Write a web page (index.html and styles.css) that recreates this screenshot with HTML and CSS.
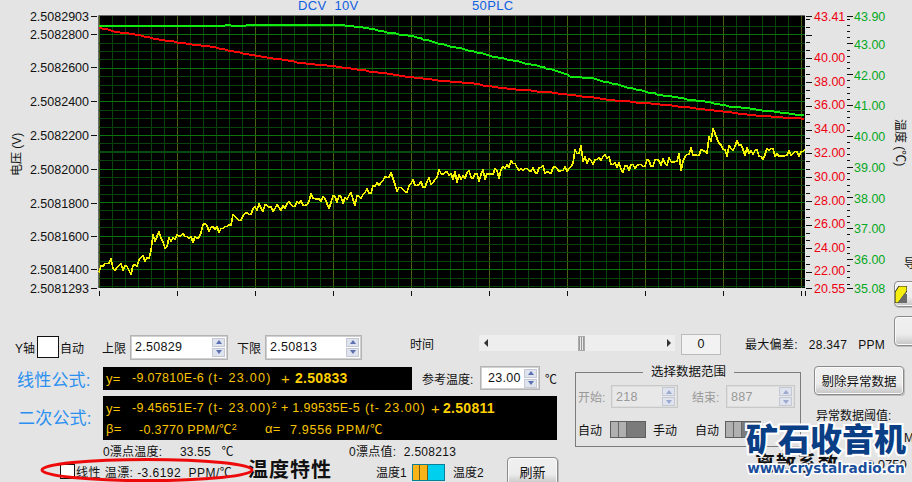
FILE: index.html
```html
<!DOCTYPE html>
<html lang="zh">
<head>
<meta charset="utf-8">
<title>温度特性</title>
<link rel="stylesheet" href="styles.css">
</head>
<body>
<main class="page">
  <section class="chart-row">
    <svg class="chart" width="894" height="330" viewBox="0 0 894 330">
      <rect class="plot-bg" x="99" y="16" width="706" height="272"/>
      <g id="grid"></g>
      <path class="plot-edge" d="M98.5 288V15.5H805"/>
      <g id="ticks"></g>
      <polyline id="green" class="trace trace-green"/>
      <polyline id="red" class="trace trace-red"/>
      <polyline id="yellow" class="trace trace-yellow"/>
      <text class="title" x="298" y="9.5">DCV  10V</text>
      <text class="title" x="472" y="9.5">50PLC</text>
      <g class="axis-left">
        <text x="89" y="21">2.5082903</text>
        <text x="89" y="39">2.5082800</text>
        <text x="89" y="72">2.5082600</text>
        <text x="89" y="106">2.5082400</text>
        <text x="89" y="140">2.5082200</text>
        <text x="89" y="174">2.5082000</text>
        <text x="89" y="208">2.5081800</text>
        <text x="89" y="241">2.5081600</text>
        <text x="89" y="274">2.5081400</text>
        <text x="89" y="293">2.5081293</text>
      </g>
      <g class="axis-red">
        <text x="814" y="21">43.41</text>
        <text x="814" y="62">40.00</text>
        <text x="814" y="86">38.00</text>
        <text x="814" y="109">36.00</text>
        <text x="814" y="133">34.00</text>
        <text x="814" y="157">32.00</text>
        <text x="814" y="181">30.00</text>
        <text x="814" y="205">28.00</text>
        <text x="814" y="228">26.00</text>
        <text x="814" y="252">24.00</text>
        <text x="814" y="275">22.00</text>
        <text x="814" y="293">20.55</text>
      </g>
      <g class="axis-green">
        <text x="854" y="21">43.90</text>
        <text x="854" y="49">43.00</text>
        <text x="854" y="80">42.00</text>
        <text x="854" y="110">41.00</text>
        <text x="854" y="141">40.00</text>
        <text x="854" y="172">39.00</text>
        <text x="854" y="203">38.00</text>
        <text x="854" y="233">37.00</text>
        <text x="854" y="264">36.00</text>
        <text x="854" y="293">35.08</text>
      </g>
      <text class="axis-title" transform="translate(21 176) rotate(-90)">电压 (V)</text>
      <text class="axis-title" transform="translate(896 119) rotate(90)">温度 (℃)</text>
    </svg>
    <div class="rail">
      <span class="rail-label">导</span>
      <button class="btn rail-btn">
        <svg class="rail-icon" width="12" height="17" viewBox="0 0 12 17"><path class="icon-yellow" d="M0 17V6L4 0H12V5L3 17Z"/><path class="icon-grey" d="M3 17L9 8H12V17Z"/></svg>
      </button>
      <button class="btn rail-btn rail-btn-plain"></button>
    </div>
  </section>

  <section class="top-row">
    <span class="lbl y-label">Y轴</span>
    <span class="check check-large"></span>
    <span class="lbl auto-label">自动</span>
    <span class="lbl upper-label">上限</span>
    <div class="num num-wide"><span class="num-val">2.50829</span><span class="spin"><i class="up"></i><i class="down"></i></span></div>
    <span class="lbl lower-label">下限</span>
    <div class="num num-wide2"><span class="num-val">2.50813</span><span class="spin"><i class="up"></i><i class="down"></i></span></div>
    <span class="lbl time-label">时间</span>
    <div class="slider"><i class="arrow-left"></i><i class="thumb"></i><i class="arrow-right"></i></div>
    <div class="zero">0</div>
    <span class="lbl maxdev">最大偏差:&nbsp; &nbsp;28.347&nbsp; &nbsp;PPM</span>
  </section>

  <section class="lower">
    <div class="formulas">
      <div class="row-b">
        <span class="formula-name name-linear">线性公式:</span>
        <div class="readout readout-linear">
          <span class="rd y">y=</span><span class="rd c1">-9.07810E-6</span><span class="rd t1">(t- 23.00)</span><span class="rd plus1">+</span><b class="rd strong1">2.50833</b>
        </div>
        <span class="lbl ref-label">参考温度:</span>
        <div class="num num-ref"><span class="num-val">23.00</span><span class="spin"><i class="up"></i><i class="down"></i></span></div>
        <span class="lbl deg">℃</span>
      </div>
      <div class="row-c">
        <span class="formula-name name-quad">二次公式:</span>
        <div class="readout readout-quad">
          <div class="rd-line">
            <span class="rd y">y=</span><span class="rd c1">-9.45651E-7</span><span class="rd t1">(t- 23.00)<sup>2</sup></span><span class="rd c2">+ 1.99535E-5</span><span class="rd t2">(t- 23.00)</span><span class="rd plus2">+</span><b class="rd strong2">2.50811</b>
          </div>
          <div class="rd-line">
            <span class="rd y">β=</span><span class="rd beta">-0.3770 PPM/℃<sup>2</sup></span><span class="rd alpha">α=</span><span class="rd alpha-val">7.9556 PPM/℃</span>
          </div>
        </div>
      </div>
      <div class="row-d">
        <span class="lbl drift-temp">0漂点温度:&nbsp; &nbsp; &nbsp;33.55&nbsp; &nbsp;℃</span>
        <span class="lbl drift-val">0漂点值:&nbsp; 2.508213</span>
      </div>
      <div class="row-e">
        <span class="check check-small"></span>
        <span class="lbl linear-drift">线性 温漂: -3.6192&nbsp; PPM/℃</span>
        <strong class="big-title temp-title">温度特性</strong>
        <span class="lbl t1-label">温度1</span>
        <span class="bi-switch"><i class="bi-on"></i></span>
        <span class="lbl t2-label">温度2</span>
        <button class="btn refresh">刷新</button>
      </div>
    </div>

    <fieldset class="range">
      <legend>选择数据范围</legend>
      <div class="range-row">
        <span class="lbl muted start-label">开始:</span>
        <div class="num num-off num-start"><span class="num-val">218</span><span class="spin"><i class="up"></i><i class="down"></i></span></div>
        <span class="lbl muted end-label">结束:</span>
        <div class="num num-off num-end"><span class="num-val">887</span><span class="spin"><i class="up"></i><i class="down"></i></span></div>
      </div>
      <div class="range-row range-row2">
        <span class="lbl auto1">自动</span>
        <span class="toggle"><i></i><i></i></span>
        <span class="lbl manual1">手动</span>
        <span class="lbl auto2">自动</span>
        <span class="toggle"><i></i><i></i></span>
      </div>
    </fieldset>

    <div class="side">
      <button class="btn purge">剔除异常数据</button>
      <span class="lbl threshold">异常数据阈值:</span>
      <span class="lbl unit-cut">M</span>
      <div class="side-bottom">
        <strong class="big-title disc-title">离散系数</strong>
        <span class="lbl disc-val">0.0750</span>
      </div>
    </div>
  </section>

  <svg class="ellipse" width="216" height="30" viewBox="0 0 216 30"><ellipse cx="108" cy="15" rx="105" ry="10.5"/></svg>
  <div class="watermark"><span class="wm-cn">矿石收音机</span><span class="wm-en">www.crystalradio.cn</span></div>
</main>
<script src="script.js"></script>
</body>
</html>
```

FILE: styles.css
```css
* { box-sizing: border-box; }
html, body { margin: 0; padding: 0; }
body { background: #e4e4e4; overflow: hidden; }
.page {
  position: relative;
  width: 912px;
  height: 482px;
  overflow: hidden;
  background: #e4e4e4;
  color: #111;
  font-family: "Liberation Sans", "Noto Sans CJK SC", sans-serif;
  font-size: 12px;
}

/* chart */
.chart-row { display: flex; height: 330px; }
.chart { display: block; flex: none; overflow: visible; }
.plot-bg { fill: #000; }
.plot-edge { fill: none; stroke: #6a6a6a; stroke-width: 1; }
.grid-minor { stroke: #0a440a; stroke-width: 1; shape-rendering: crispEdges; }
.grid-h { stroke: #0a720a; stroke-width: 1; shape-rendering: crispEdges; }
.grid-v { stroke: #476410; stroke-width: 1; shape-rendering: crispEdges; }
.grid-thick { stroke: #0a4c0e; stroke-width: 2; shape-rendering: crispEdges; }
.tick { stroke: #111; stroke-width: 1; shape-rendering: crispEdges; }
.trace { fill: none; stroke-width: 2; stroke-linejoin: bevel; shape-rendering: crispEdges; }
.trace-green { stroke: #0fe90f; }
.trace-red { stroke: #f40808; }
.trace-yellow { stroke: #f4f400; stroke-width: 1.7; }
.title {
  fill: #1060e0;
  font-size: 13px;
  letter-spacing: 0.35px;
  white-space: pre;
}
.axis-left text { fill: #111; font-size: 12.5px; text-anchor: end; }
.axis-red text { fill: #ee0010; font-size: 12.5px; }
.axis-green text { fill: #04a81e; font-size: 12.5px; }
.axis-title { fill: #111; font-size: 12px; }

/* right rail */
.rail { width: 18px; flex: none; display: flex; flex-direction: column; }
.rail-label { flex: none; margin: 256px 0 0 10px; height: 17px; line-height: 17px; white-space: nowrap; }
.rail-btn { flex: none; width: 26px; height: 26px; margin-top: 8px; padding: 3px 0 0 9px; display: block; }
.rail-btn-plain { height: 30px; margin-top: 9px; }
.rail-icon { display: block; }
.icon-yellow { fill: #f6ee10; stroke: #222; stroke-width: 1; }
.icon-grey { fill: #6a6a6a; }

/* shared controls */
.lbl { white-space: nowrap; flex: none; }
.muted { color: #999; }
.check { display: block; flex: none; background: #fff; border: 1px solid #111; }
.check-large { width: 22px; height: 22px; margin-left: 4px; }
.check-small { width: 15px; height: 15px; margin-left: 60px; margin-top: 7px; }
.num {
  display: flex;
  align-items: center;
  flex: none;
  background: #fff;
  border: 1px solid #b4b4b4;
  outline: 1px solid #d0d0d0;
  outline-offset: -2px;
  font-size: 12.5px;
}
.num-val { flex: 1; padding-left: 4px; letter-spacing: 0.3px; }
.spin { display: flex; flex-direction: column; gap: 1px; width: 13px; margin-right: 2px; }
.spin i {
  display: flex;
  align-items: center;
  justify-content: center;
  height: 9px;
  background: #dfe3ee;
  border: 1px solid #c4c8d2;
}
.spin i::before { content: ""; border-left: 3px solid transparent; border-right: 3px solid transparent; }
.spin .up::before { border-bottom: 4px solid #5b70b0; }
.spin .down::before { border-top: 4px solid #5b70b0; }
.num-off { background: #e8e8e8; color: #999; border-color: #c8c8c8; outline-color: #dedede; }
.num-off .spin i::before { opacity: 0.5; }
.btn {
  border: 1px solid #8a8a8a;
  border-radius: 4px;
  background: linear-gradient(#f0f0f0 0, #ececec 62%, #c4c4c4 100%);
  box-shadow: 1px 1px 0 #bdbdbd, inset 0 0 0 1px #fafafa;
  font: inherit;
  color: #111;
  padding: 0;
}

/* top row */
.top-row { display: flex; align-items: center; height: 26px; margin-top: 4px; }
.y-label { margin-left: 15px; width: 18px; }
.auto-label { margin-left: 1px; width: 24px; }
.upper-label { margin-left: 18px; width: 25px; }
.num-wide { margin-left: 3px; width: 98px; height: 25px; }
.lower-label { margin-left: 9px; width: 25px; }
.num-wide2 { margin-left: 3px; width: 97px; height: 25px; }
.time-label { margin: 0 0 8px 48px; width: 24px; }
.slider {
  display: flex;
  align-items: center;
  flex: none;
  width: 196px;
  height: 16px;
  margin: 0 0 8px 45px;
  padding: 0 4px 0 5px;
  background: #eeeeee;
}
.arrow-left { border: 4px solid transparent; border-left: 0; border-right: 4px solid #333; }
.thumb {
  width: 7px;
  height: 15px;
  margin: 0 auto 0 90px;
  background: repeating-linear-gradient(90deg, #999 0 1px, #e8e8e8 1px 2px);
  border: 1px solid #aaa;
}
.arrow-right { border: 4px solid transparent; border-right: 0; border-left: 4px solid #333; }
.zero {
  flex: none;
  width: 40px;
  height: 21px;
  margin: 0 0 5px 6px;
  border: 1px solid #bbb;
  background: #f2f2f2;
  text-align: center;
  line-height: 19px;
  font-size: 12.5px;
}
.maxdev { margin: 0 0 8px 24px; letter-spacing: 0.3px; }

/* lower */
.lower { display: flex; height: 122px; align-items: flex-start; }
.formulas { width: 565px; flex: none; }
.row-b, .row-c { display: flex; align-items: center; margin-top: 6px; }
.row-b { height: 24px; }
.row-c { height: 44px; }
.formula-name { color: #2a8ff0; font-size: 17px; letter-spacing: 0.2px; white-space: nowrap; flex: none; }
.name-linear { margin-left: 17px; width: 86px; }
.name-quad { margin-left: 18px; width: 85px; margin-bottom: 4px; }
.readout {
  background: #000;
  color: #f8c400;
  flex: none;
  font-size: 12.5px;
  letter-spacing: 0.3px;
  padding-left: 3px;
}
.readout-linear { display: flex; align-items: center; width: 309px; height: 23px; }
.readout-quad { width: 454px; height: 44px; padding-top: 2px; }
.rd-line { display: flex; align-items: center; height: 20px; }
.rd { flex: none; white-space: nowrap; }
.rd sup { font-size: 9px; line-height: 0; vertical-align: 4px; }
.rd.y { width: 26px; font-size: 13px; }
.c1 { width: 76px; }
.t1 { width: 73px; letter-spacing: 1.3px; }
.plus1 { width: 14px; font-size: 15px; }
.strong1, .strong2 { font-size: 14px; color: #ffd000; }
.c2 { width: 84px; }
.t2 { width: 66px; letter-spacing: 1px; }
.plus2 { width: 11px; font-size: 15px; }
.strong2 { margin-left: 1px; }
.beta { margin-left: 7px; width: 126px; }
.alpha { width: 25px; font-size: 13px; }
.alpha-val { display: block; letter-spacing: 0.7px; }
.ref-label { margin-left: 10px; width: 58px; }
.num-ref { width: 60px; height: 24px; }
.num-ref .num-val { padding-left: 7px; }
.deg { margin-left: 5px; }
.row-d { display: flex; height: 13px; margin-top: 4px; align-items: center; }
.drift-temp { margin-left: 103px; width: 246px; letter-spacing: 0.2px; }
.drift-val { letter-spacing: 0.3px; }
.row-e { display: flex; align-items: flex-start; height: 25px; }
.row-e .lbl { margin-top: 6px; }
.row-e .linear-drift { margin-left: 1px; width: 172px; letter-spacing: 0.45px; }
.big-title { font-size: 20px; font-weight: 700; white-space: nowrap; line-height: 26px; flex: none; }
.temp-title { width: 128px; letter-spacing: 1px; }
.t1-label { width: 36px; }
.bi-switch {
  display: block;
  flex: none;
  width: 33px;
  height: 17px;
  margin-top: 7px;
  background: #00cfee;
  border: 1px solid #0a7f96;
}
.bi-on {
  display: block;
  width: 15px;
  height: 15px;
  background: linear-gradient(90deg, #f9b418 0 6px, #7a5a10 6px 7px, #f9b418 7px 14px, #7a5a10 14px);
}
.t2-label { margin-left: 8px; width: 54px; }
.refresh { width: 51px; height: 28px; margin-top: 0; font-size: 13px; flex: none; }

/* range group */
.range {
  flex: none;
  width: 226px;
  height: 82px;
  margin: 5px 0 0 10px;
  padding: 0 0 0 2px;
  border: 1px solid #7c7c7c;
  min-width: 0;
}
.range legend { padding: 0 8px; margin-left: 65px; font-size: 12.5px; line-height: 14px; }
.range-row { display: flex; align-items: center; height: 23px; margin-top: 6px; }
.range-row2 { height: 17px; margin-top: 13px; }
.start-label { width: 33px; }
.num-start { width: 67px; height: 23px; }
.end-label { margin-left: 14px; width: 34px; }
.num-end { width: 69px; height: 23px; }
.auto1 { width: 32px; }
.toggle {
  display: flex;
  flex: none;
  width: 36px;
  height: 17px;
  background: #7b7b7b;
  border: 1px solid #5e5e5e;
}
.toggle i { display: block; width: 8px; background: #b0b0b0; border-right: 1px solid #666; }
.manual1 { margin-left: 7px; width: 42px; }
.auto2 { width: 30px; }

/* side */
.side { flex: none; width: 98px; margin-left: 13px; display: flex; flex-direction: column; }
.purge { width: 90px; height: 29px; margin-top: 6px; font-size: 12.5px; }
.threshold { margin: 11px 0 0 2px; }
.unit-cut { margin: 8px 0 0 90px; height: 14px; line-height: 14px; }
.side-bottom { display: flex; margin: 6px 0 0 -59px; align-items: center; height: 26px; }
.disc-title { width: 112px; letter-spacing: 1px; }
.disc-val { font-size: 13px; }

/* overlays */
.ellipse { position: absolute; left: 39px; top: 455px; }
.ellipse ellipse { fill: none; stroke: #ee0a0a; stroke-width: 3; }
.watermark {
  position: absolute;
  left: 745px;
  top: 421px;
  width: 162px;
  display: flex;
  flex-direction: column;
  align-items: center;
  color: #0a3f86;
}
.wm-cn {
  font-size: 32px;
  line-height: 38px;
  font-weight: 900;
  white-space: nowrap;
  -webkit-text-stroke: 4px #fff;
  paint-order: stroke fill;
}
.wm-en {
  font-family: "DejaVu Sans", sans-serif;
  font-size: 13.7px;
  line-height: 19px;
  font-weight: 700;
  color: #1a4f9c;
  white-space: nowrap;
  -webkit-text-stroke: 3px #fff;
  paint-order: stroke fill;
}
```

FILE: script.js
```js
(function () {
  var NS = 'http://www.w3.org/2000/svg';
  function line(parent, cls, x1, y1, x2, y2) {
    var l = document.createElementNS(NS, 'line');
    l.setAttribute('class', cls);
    l.setAttribute('x1', x1); l.setAttribute('y1', y1);
    l.setAttribute('x2', x2); l.setAttribute('y2', y2);
    parent.appendChild(l);
  }
  var grid = document.getElementById('grid');
  var ticks = document.getElementById('ticks');
  var L = 99, R = 805, T = 16, B = 288, i, x, y;

  // vertical grid: minor every 13px, major every 78px
  for (i = 0; ; i++) {
    x = 99.5 + i * 13;
    if (x > R) break;
    line(grid, i % 6 === 0 ? 'grid-v' : 'grid-minor', x, T, x, B);
  }
  // horizontal grid: major every 33.6px, minor at 1/4
  for (i = -1; i < 32; i++) {
    y = Math.round(34.3 + i * 8.39) + 0.5;
    if (y < T || y > B) continue;
    line(grid, (i % 4 === 0 && i >= 0) ? 'grid-h' : 'grid-minor', L, y, R, y);
  }
  line(grid, 'grid-thick', L, 152, R, 152);

  // x ticks
  for (i = 0; i < 10; i++) {
    x = 99.5 + i * 78;
    if (x < R) line(ticks, 'tick', x, 291, x, 296);
  }
  line(ticks, 'tick', 805.5, 291, 805.5, 296);

  // left axis ticks
  [16, 34, 67, 101, 135, 169, 203, 236, 269, 288].forEach(function (v) {
    line(ticks, 'tick', 91, v + 0.5, 97, v + 0.5);
  });
  // red axis ticks
  for (i = 0; i < 36; i++) {
    y = 288 - i * 7.92;
    if (y < 15) break;
    line(ticks, 'tick', 806, Math.round(y) + 0.5, (i % 3 === 2 ? 812 : 810), Math.round(y) + 0.5);
  }
  line(ticks, 'tick', 806, 16.5, 812, 16.5);
  line(ticks, 'tick', 806, 288.5, 812, 288.5);
  // green axis ticks
  for (i = 0; i < 50; i++) {
    y = 289.8 - i * 6.16;
    if (y < 15) break;
    if (y > 288) continue;
    line(ticks, 'tick', 847, Math.round(y) + 0.5, (i % 5 === 0 ? 853 : 850), Math.round(y) + 0.5);
  }
  line(ticks, 'tick', 847, 16.5, 853, 16.5);
  line(ticks, 'tick', 847, 288.5, 853, 288.5);

  // seeded random
  var seed = 20240611;
  function rnd() {
    seed |= 0; seed = seed + 0x6D2B79F5 | 0;
    var t = Math.imul(seed ^ seed >>> 15, 1 | seed);
    t = t + Math.imul(t ^ t >>> 7, 61 | t) ^ t;
    return ((t ^ t >>> 14) >>> 0) / 4294967296;
  }
  function at(a, x) {
    for (var k = 0; k < a.length - 1; k++) {
      if (x <= a[k + 1][0]) {
        var f = (x - a[k][0]) / (a[k + 1][0] - a[k][0]);
        return a[k][1] + f * (a[k + 1][1] - a[k][1]);
      }
    }
    return a[a.length - 1][1];
  }
  function trace(id, anchors, step, amp, spike) {
    var pts = [];
    for (var x = 99; x <= 805; x += step) {
      var y = at(anchors, x);
      if (amp) {
        y += (rnd() - 0.5) * 2 * amp;
        if (spike && rnd() < 0.18) y += (rnd() - 0.5) * 2 * spike;
      }
      pts.push(x + ',' + (Math.round(y) + 0.5));
    }
    document.getElementById(id).setAttribute('points', pts.join(' '));
  }
  trace('green', [[99,25.5],[250,24.5],[300,24.3],[333,24],[360,26],[383,31],[410,35],[443,44],[467,49],[490,55],[513,60],[533,64],[560,71],[570,75.5],[590,77],[613,83],[637,89],[660,94],[683,98],[707,101],[733,106],[757,109],[777,111],[805,114.5]], 3, 0.3);
  trace('red', [[99,27],[115,31],[130,33],[150,37],[180,42],[210,46],[250,54],[300,62],[333,65.5],[367,70],[400,75],[433,79],[467,82],[500,87],[533,90],[560,93],[583,95.5],[617,100],[650,102.5],[683,106],[717,110],[750,114],[783,117],[805,118]], 3, 0.3);
  trace('yellow', [[99,268],[110,260],[115,268],[130,265],[145,258],[151,252],[153,238],[165,244],[180,237],[195,238],[200,231],[205,223],[215,225],[225,228],[235,218],[250,215],[255,205],[270,210],[290,205],[310,200],[333,198],[363,195],[377,184],[392,180],[400,192],[417,185],[440,177],[457,175],[473,175],[487,172],[507,164],[527,168],[550,170],[572,169],[575,151],[583,158],[593,164],[603,157],[627,166],[650,163],[683,159],[693,152],[707,150],[713,136],[716,134],[721,148],[737,147],[757,152],[790,152],[805,155]], 2, 4.5, 8);
})();
```
